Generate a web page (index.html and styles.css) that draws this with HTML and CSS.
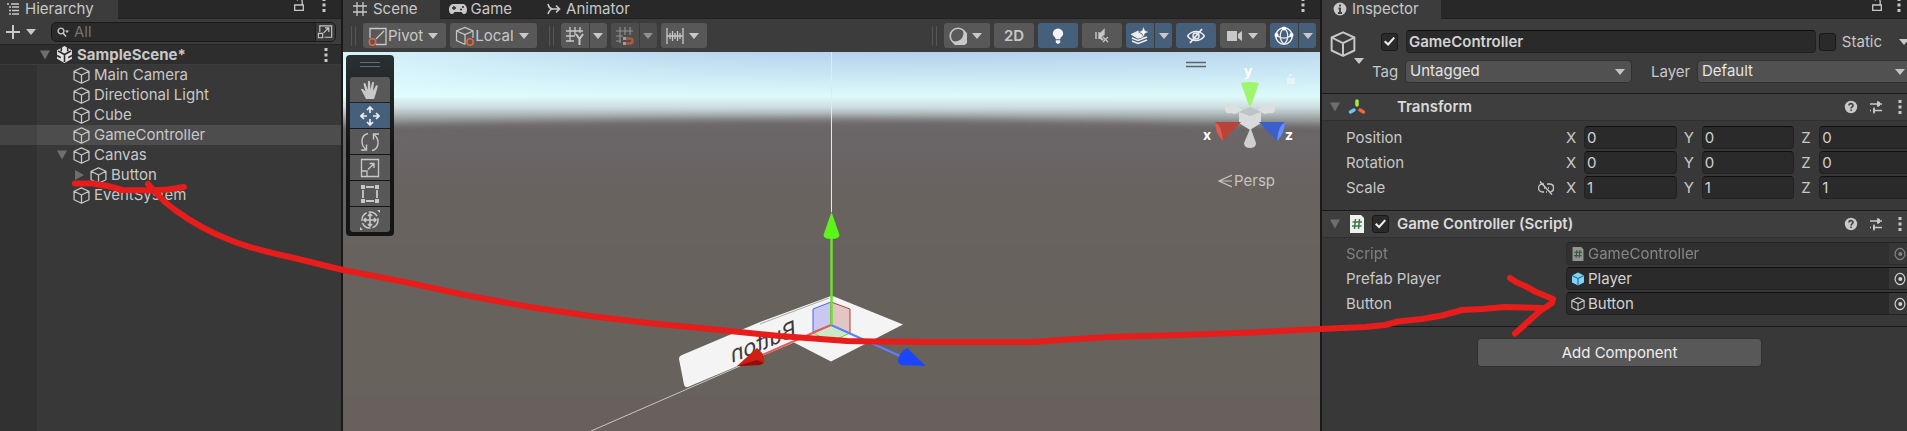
FILE: index.html
```html
<!DOCTYPE html>
<html lang="en">
<head>
<meta charset="utf-8">
<title>SampleScene</title>
<link rel="stylesheet" href="styles.css">
</head>
<body>
<svg class="defs" aria-hidden="true">
  <symbol id="cube" viewBox="0 0 16 16"><path d="M8 .8 15 4v8L8 15.300 1 12V4ZM1 4l7 3.500L15 4M8 7.500v7.800" fill="none" stroke="currentColor" stroke-width="1.200" stroke-linejoin="round"/></symbol>
  <symbol id="dots" viewBox="0 0 4 14"><path d="M.5 0h3v3h-3zM.5 5.500h3v3h-3zM.5 11h3v3h-3z" fill="currentColor"/></symbol>
  <symbol id="lock" viewBox="0 0 12 14"><path d="M1.700 7h8.600v5.300H1.700zM9.200 7V3.500a2.600 2.600 0 0 0-5-1" fill="none" stroke="currentColor" stroke-width="1.300"/></symbol>
  <symbol id="down" viewBox="0 0 10 6"><path d="M0 0h10L5 6z" fill="currentColor"/></symbol>
  <symbol id="fold" viewBox="0 0 10 10"><path d="M0 .5h10L5 9.500z" fill="currentColor"/></symbol>
  <symbol id="help" viewBox="0 0 14 14"><circle cx="7" cy="7" r="6.200" fill="currentColor"/><path d="M5 5.500C5 3 9 3 9 5.400 9 6.800 7.100 6.800 7.100 8.400M7.100 9.600v1.500" fill="none" stroke="#3e3e3e" stroke-width="1.600"/></symbol>
  <symbol id="sliders" viewBox="0 0 14 14"><path d="M1 4h7M11 4h2M9 1v6M1 10.500h1M5 10.500h8M5 7.500v6" fill="none" stroke="currentColor" stroke-width="1.400"/><path d="M8 2h3v4H8zM4 8.500h2v4H4z" fill="currentColor"/></symbol>
  <symbol id="target" viewBox="0 0 12 14"><ellipse cx="6" cy="7" rx="4.900" ry="5.600" fill="none" stroke="currentColor" stroke-width="1.200"/><circle cx="6.300" cy="7" r="2" fill="currentColor"/></symbol>
  <symbol id="script" viewBox="0 0 16 18"><path d="M1 0h11l3 3v15H1z" fill="#f0f0f0"/><path d="M6.500 4 5.500 14M10.500 4l-1 10M3.500 7h9.500M3 11h9.500" fill="none" stroke="#3a7a44" stroke-width="1.500"/></symbol>
</svg>

<main class="editor">
  <section class="panel hierarchy">
    <header class="tabs">
      <button class="tab tab-active"><svg class="i14" viewBox="0 0 14 14"><path d="M1 2h2M5 2h8M3 5h2M6 5h7M3 8.500h2M6 8.500h7M3 12h2M6 12h7" stroke="currentColor" stroke-width="1.300"/></svg>Hierarchy</button>
      <div class="tab-tools"><svg class="lock"><use href="#lock"/></svg><svg class="dots"><use href="#dots"/></svg></div>
    </header>
    <div class="search-bar">
      <button class="add" aria-label="Create"><svg class="plus" viewBox="0 0 16 16"><path d="M8 1v14M1 8h14" stroke="currentColor" stroke-width="2"/></svg><svg class="down"><use href="#down"/></svg></button>
      <label class="search">
        <svg class="lens" viewBox="0 0 12 10"><circle cx="4" cy="4" r="2.900" fill="none" stroke="currentColor" stroke-width="1.400"/><path d="m6 6 3 3.500" stroke="currentColor" stroke-width="1.500"/><path d="M8 3.500h4L10 6z" fill="currentColor"/></svg>
        <input type="text" placeholder="All" aria-label="Search hierarchy">
        <svg class="picker" viewBox="0 0 20 18"><path d="M4 9V2.500h12.500v12H9M2.500 10.500H7V15H2.500zM8 10l5.500-5.500M9.500 4.700h4V9" fill="none" stroke="currentColor" stroke-width="1.200"/></svg>
      </label>
    </div>
    <ul class="tree">
      <li class="row scene-row"><svg class="right fold"><use href="#fold"/></svg><svg class="i16" viewBox="0 0 16 16"><path d="M8 0 1 4v8l7 4 7-4V4Z" fill="#e4e4e4"/><path d="M8 8v7M8 8 2 4.700M8 8l6-3.300M5 1v4M11 1v4M1 9l3.500 2M15 9l-3.500 2" stroke="#2d2d2d" stroke-width="1.500"/></svg><b>SampleScene*</b><svg class="dots"><use href="#dots"/></svg></li>
      <li class="row l1"><svg class="i16"><use href="#cube"/></svg>Main Camera</li>
      <li class="row l1"><svg class="i16"><use href="#cube"/></svg>Directional Light</li>
      <li class="row l1"><svg class="i16"><use href="#cube"/></svg>Cube</li>
      <li class="row l1 selected"><svg class="i16"><use href="#cube"/></svg>GameController</li>
      <li class="row l1 open"><svg class="right fold"><use href="#fold"/></svg><svg class="i16"><use href="#cube"/></svg>Canvas</li>
      <li class="row l2 open"><svg class="right fold" viewBox="0 0 10 10"><path d="M1 0v10l9-5z" fill="currentColor"/></svg><svg class="i16"><use href="#cube"/></svg>Button</li>
      <li class="row l1"><svg class="i16"><use href="#cube"/></svg>EventSystem</li>
    </ul>
  </section>

  <section class="panel scene">
    <header class="tabs">
      <button class="tab tab-active tab-scene"><svg class="i14" viewBox="0 0 14 14"><path d="M4 0v14M10 0v14M0 4h14M0 10h14" stroke="currentColor" stroke-width="1.300"/></svg>Scene</button>
      <button class="tab tab-game"><svg class="pad" viewBox="0 0 18 12"><path d="M5 1h8c3 0 5 2 5 5.500 0 5-3.500 6-5.500 2.500h-7C3.500 12.500 0 11.500 0 6.500 0 3 2 1 5 1Z" fill="currentColor"/><path d="M5 3v4M3 5h4" stroke="#282828" stroke-width="1.300"/><circle cx="12" cy="6.500" r="1" fill="#282828"/><circle cx="14" cy="4" r="1" fill="#282828"/></svg>Game</button>
      <button class="tab tab-anim"><svg class="i14" viewBox="0 0 14 14"><path d="M1 2c1 4 3 5 5 5h6M1 12c1-3 2-5 5-5M9 3.500 12.500 7 9 10.500" fill="none" stroke="currentColor" stroke-width="1.700"/></svg>Animator</button>
      <div class="tab-tools"><svg class="dots"><use href="#dots"/></svg></div>
    </header>
    <div class="toolbar">
      <span class="grip"></span>
      <button class="tool"><svg class="i20" viewBox="0 0 20 20"><path d="M2 12V2.500h16v16H8M8 13l8-8" fill="none" stroke="currentColor" stroke-width="1.300"/><circle cx="4.500" cy="16" r="3.200" fill="none" stroke="#e8663d" stroke-width="1.500"/></svg>Pivot<svg class="down"><use href="#down"/></svg></button>
      <button class="tool"><svg class="i20" viewBox="0 0 20 20"><path d="M10 18.500 1.500 14.500V5L10 1.500 18 5v7M1.500 5 10 8.500 18 5M10 8.500v10" fill="none" stroke="currentColor" stroke-width="1.200"/><circle cx="15" cy="16" r="3.200" fill="none" stroke="#e8663d" stroke-width="1.500"/></svg>Local<svg class="down"><use href="#down"/></svg></button>
      <span class="grip grip-mid"></span>
      <div class="split">
        <button class="tool narrow" aria-label="Grid axis"><svg class="i18" viewBox="0 0 18 18"><path d="M4 0v15M9 0v8M14 0v6M0 4h17M0 9h9M0 14h8" stroke="currentColor" stroke-width="1.300" fill="none"/><path d="m10 7 3.500 5V18M17 7l-3.500 5" stroke="currentColor" stroke-width="2" fill="none"/></svg></button>
        <button class="tool caret" aria-label="Grid options"><svg class="down"><use href="#down"/></svg></button>
      </div>
      <div class="split dim">
        <button class="tool narrow" aria-label="Grid snapping"><svg class="i18" viewBox="0 0 18 18"><path d="M4 0v16M9 0v8M14 0v8M0 4h17M0 9h7M0 14h5" stroke="currentColor" stroke-width="1.200" fill="none"/><path d="M10 11.500h4a2 2 0 0 1 0 5h-4" stroke="#ff6a3a" stroke-width="2.600" fill="none"/><path d="M7 10h3v3H7zM7 15h3v3H7z" fill="#ddd"/></svg></button>
        <button class="tool caret" aria-label="Snap options"><svg class="down"><use href="#down"/></svg></button>
      </div>
      <button class="tool" aria-label="Increment snapping"><svg class="i18" viewBox="0 0 18 18"><path d="M1 1v16M17 1v16M1 9h16M4 6v6M6.500 4v10M9 6v6M11.500 4v10M14 6v6" stroke="currentColor" stroke-width="1.300"/></svg><svg class="down"><use href="#down"/></svg></button>
      <span class="spacer"></span>
      <span class="grip"></span>
      <button class="tool" aria-label="Draw mode"><svg class="i18" viewBox="0 0 18 18"><circle cx="9" cy="9" r="7.800" fill="none" stroke="currentColor" stroke-width="1.600"/><path d="M14 3a8.500 8.500 0 1 1-11 11c7 2 13-3 11-11Z" fill="currentColor"/></svg><svg class="down"><use href="#down"/></svg></button>
      <button class="tool square bold">2D</button>
      <button class="tool square on" aria-label="Scene lighting"><svg class="i18" viewBox="0 0 18 18"><path d="M9 1.500a5.200 5.200 0 0 1 5.200 5.200c0 2.500-2.700 3-3 5.500H6.800c-.3-2.500-3-3-3-5.500A5.200 5.200 0 0 1 9 1.500ZM6.800 13.200h4.400v2.500L9 17 6.800 15.700Z" fill="#f4f4f4"/></svg></button>
      <button class="tool square" aria-label="Scene audio"><svg class="i18" viewBox="0 0 18 18"><path d="M3 5v7M6 5v7M7 7l4-4v11l-4-3Z" stroke="currentColor" stroke-width="1.400" fill="currentColor"/><path d="m10 9 6 7M16 9l-6 7" stroke="#585858" stroke-width="3.500"/><path d="m10 10 5 5M15 10l-5 5" stroke="currentColor" stroke-width="1.200"/></svg></button>
      <div class="split">
        <button class="tool narrow on" aria-label="Effects"><svg class="i18" viewBox="0 0 18 18"><path d="m1 7.500 6-3 1.500 2 3.500 3L7 11ZM1 11l6 2.500 9-3.500M1 14l6 2.500 9-3.500" fill="none" stroke="#eee" stroke-width="1.600"/><path d="m2 7.500 5-2.500 5 4-5 1.500z" fill="#eee"/><path d="M12.500-.5 14 3.500 18 5 14 6.500 12.500 10 11 6.500 7.500 5 11 3.500Z" fill="#fff" stroke="#46607c" stroke-width=".6"/></svg></button>
        <button class="tool caret on" aria-label="Effects options"><svg class="down"><use href="#down"/></svg></button>
      </div>
      <button class="tool square on" aria-label="Hidden objects"><svg class="i18" viewBox="0 0 18 18"><path d="M.5 9C5 3 13 3 17.500 9 13 15 5 15 .5 9Z" fill="none" stroke="#eee" stroke-width="1.500"/><circle cx="9" cy="9" r="3" fill="none" stroke="#eee" stroke-width="1.500"/><path d="M3 16 15 2" stroke="#eee" stroke-width="1.800"/></svg></button>
      <button class="tool" aria-label="Camera settings"><svg class="i18" viewBox="0 0 18 18"><path d="M2 4h10v10H2zM13 7l4-3v10l-4-3z" fill="currentColor"/></svg><svg class="down"><use href="#down"/></svg></button>
      <div class="split last">
        <button class="tool narrow on" aria-label="Gizmos"><svg class="i20" viewBox="0 0 20 20"><circle cx="10" cy="10" r="8.200" fill="none" stroke="#eee" stroke-width="1.600"/><path d="M10 2c-5 4-5 12 0 16M10 2c5 4 5 12 0 16M2 9c5 4 11 4 16 0" fill="none" stroke="#eee" stroke-width="1.300"/><circle cx="10" cy="2.500" r="2" fill="#fff"/><circle cx="2.500" cy="9" r="2" fill="#fff"/><circle cx="17.500" cy="9" r="2" fill="#fff"/></svg></button>
        <button class="tool caret on" aria-label="Gizmo options"><svg class="down"><use href="#down"/></svg></button>
      </div>
    </div>
    <div class="viewport">
      <svg class="world" viewBox="343 52 977 379" preserveAspectRatio="xMidYMin slice">
        <defs>
          <linearGradient id="sky" x1="0" y1="0" x2="0" y2="1"><stop offset="0" stop-color="#b5d0ec"/><stop offset=".3" stop-color="#c9e6f4"/><stop offset=".56" stop-color="#e0fafb"/><stop offset=".7" stop-color="#cfe0e1"/><stop offset="1" stop-color="#6c6769"/></linearGradient>
          <linearGradient id="glow" x1="0" y1="0" x2="1" y2="0"><stop offset="0" stop-color="#e2ffff" stop-opacity=".75"/><stop offset=".35" stop-color="#d8f8ff" stop-opacity=".2"/><stop offset=".6" stop-color="#cfeaf4" stop-opacity="0"/><stop offset="1" stop-color="#d4f8fa" stop-opacity=".25"/></linearGradient>
          <linearGradient id="ground" x1="0" y1="0" x2="0" y2="1"><stop offset="0" stop-color="#6c676a"/><stop offset=".22" stop-color="#68635f"/><stop offset="1" stop-color="#69615b"/></linearGradient>
          <filter id="soft" x="-5%" y="-10%" width="110%" height="120%"><feGaussianBlur stdDeviation="4"/></filter>
        </defs>
        <rect x="343" y="52" width="977" height="78" fill="url(#sky)"/>
        <rect x="343" y="52" width="977" height="46" fill="url(#glow)"/>
        <path d="M300 130Q830 109 1360 130V500H300Z" fill="url(#ground)" filter="url(#soft)"/>
        <path d="M831.500 52V212" stroke="#e8e8e8"/>
        <path d="M591 431 740 366" stroke="#c9c6c2"/>
        <path d="M679 359q0-3 3-4l78-33 71-26 3 .5 69 28-72 37-37-19-55 23-50 21q-4 2-5-2Z" fill="#f4f4f4"/>
        <path d="m760 324 69-26" stroke="#a9a9a9" fill="none"/>
        <text class="mirror" transform="matrix(-.92 .39 .05 1 796 336)">Button</text>
        <path d="m831 302-18 7v23l18-7z" fill="#c9c9f0" stroke="#4763f0"/>
        <path d="m831 302 19 7v24l-19-8z" fill="#e2c6c6" stroke="#b83c35"/>
        <path d="m831 325-18 8 18 8 19-8z" fill="#cde8c6"/><path d="m813 333 8 4M850 333l-11 5" stroke="#5fd52e"/>
        <path d="M831 325 762 355" stroke="#e85a55" stroke-width="2"/>
        <path d="m831 325 69 31" stroke="#5c80ff" stroke-width="2"/>
        <path d="M831.500 325V236" stroke="#6ae02f" stroke-width="2.500"/>
        <path d="m831.500 212 8 23q0 4-8 4t-8-4z" fill="#5cf41b"/>
        <path d="m737 366 20-18q9 7 7 15l-4 2z" fill="#d01f15"/><path d="m737 366 20-6 7 3-4 2z" fill="#8d100c"/>
        <path d="m926 366-19-18q-9 5-9 14l3 3z" fill="#1a46ff"/>
      </svg>
      <div class="toolbox">
        <span class="lines"></span>
        <button aria-label="View tool"><svg class="i20" viewBox="0 0 20 20"><path d="M6 19 4 15 1 9.500q1-1.500 3 .5l1.500 1.500L3.500 4q1-2 2.200 0l2 6L8 1.500q1-1.700 2 0l.5 8 1.500-7q1.500-1.500 2 .3L13 11l3-5.500q1.700-1 1.800.7L16 13l-2 6Z" fill="currentColor"/></svg></button>
        <button class="on" aria-label="Move tool"><svg class="i20" viewBox="0 0 20 20"><path d="M10 7V1.500M7 4l3-3 3 3M10 13v5.500M7 16l3 3 3-3M7 10H1.500M4 7l-3 3 3 3M13 10h5.500M16 7l3 3-3 3" fill="none" stroke="#eee" stroke-width="1.700"/></svg></button>
        <button aria-label="Rotate tool"><svg class="i20" viewBox="0 0 20 20"><path d="M8 1.500C1 3 0 12 5.500 17M1 18h5.500v-5.500M12 18.500C19 17 20 8 14.500 3M19 2h-5.500v5.500" fill="none" stroke="currentColor" stroke-width="1.400"/></svg></button>
        <button aria-label="Scale tool"><svg class="i20" viewBox="0 0 20 20"><path d="M1.500 1.500h17v17h-17zM1.500 13H7v5.500M8 11.500l6-6M9.500 5.500H14V10" fill="none" stroke="currentColor" stroke-width="1.300"/></svg></button>
        <button aria-label="Rect tool"><svg class="i20" viewBox="0 0 20 20"><path d="M3 6v8M17 6v8M6 3h8M6 17h8" stroke="currentColor" stroke-width="1.800"/><path d="M1 1h4v4H1zM15 1h4v4h-4zM1 15h4v4H1zM15 15h4v4h-4z" fill="currentColor"/></svg></button>
        <button aria-label="Transform tool"><svg class="i20" viewBox="0 0 20 20"><circle cx="10" cy="10" r="8" fill="none" stroke="currentColor" stroke-width="1.500" stroke-dasharray="10 2"/><path d="M10 4v12M4 10h12M8 6l2-2 2 2M8 14l2 2 2-2M6 8l-2 2 2 2M14 8l2 2-2 2" fill="none" stroke="currentColor" stroke-width="1.600"/><path d="M17 0h3v3zM0 17v3h3z" fill="currentColor"/></svg></button>
      </div>
      <div class="orient">
        <svg viewBox="0 0 120 106">
          <path d="M1 10.500h20M1 14.500h20" stroke="#5b6467" stroke-width="1.400"/>
          <path d="M40 57q0-7 8-5l10 6-8 4-4-1q-6 1-6-4M90 57q0-7-8-5l-10 6 8 4 4-1q6 1 6-4" fill="#dcdfdf"/>
          <path d="M65 77h1l5 14q0 5-6 5t-6-5z" fill="#cfcfcf"/>
          <path d="m54 60 11-5 11 5v11l-11 7-11-7z" fill="#d9dadb"/><path d="m54 60 11-5 11 5-11 4z" fill="#bfc3c3"/>
          <path d="M56 31q9-2 18 0l-8 23h-2z" fill="#a0f56e"/>
          <path d="M30 70h26L38 89q-8-8-8-19" fill="#b8433a"/><path d="M30 70q7 4 8 19-8-8-8-19" fill="#dd5a4f"/>
          <path d="M100 70H74l18 19q8-8 8-19" fill="#3c5fc9"/><path d="M100 70q-7 4-8 19 8-8 8-19" fill="#6b8cff"/>
          <text x="59" y="24">y</text><text x="18" y="88">x</text><text x="100" y="88">z</text>
          <path d="M102 26h8v6h-8zM103 26q1-6 5-3" fill="#eaf6f7" fill-opacity=".8"/>
        </svg>
        <span class="persp"><svg class="i14" viewBox="0 0 14 14"><path d="M14 1 1 7l13 6M1 7h13" fill="none" stroke="currentColor" stroke-width="1.200"/></svg>Persp</span>
      </div>
    </div>
  </section>

  <section class="panel inspector">
    <header class="tabs">
      <button class="tab tab-active"><svg class="i14" viewBox="0 0 14 14"><circle cx="7" cy="7" r="6.400" fill="currentColor"/><path d="M7 2.500v2M5.500 6.500H7V11M5 11h4" stroke="#3c3c3c" stroke-width="1.800" fill="none"/></svg>Inspector</button>
      <div class="tab-tools"><svg class="lock"><use href="#lock"/></svg><svg class="dots"><use href="#dots"/></svg></div>
    </header>
    <div class="body">
      <div class="object">
        <svg class="big-cube"><use href="#cube"/></svg><svg class="down cube-caret"><use href="#down"/></svg>
        <div class="object-rows">
          <div class="line">
            <input type="checkbox" id="active" checked aria-label="Active"><input class="field name" type="text" value="GameController" aria-label="Name"><input type="checkbox" id="static"><label class="static" for="static">Static</label><svg class="down"><use href="#down"/></svg>
          </div>
          <div class="line">
            <label class="tag" for="tag">Tag</label><span class="select"><select id="tag"><option>Untagged</option></select></span>
            <label class="layer" for="layer">Layer</label><span class="select"><select id="layer"><option>Default</option></select></span>
          </div>
        </div>
      </div>

      <div class="component-head">
        <svg class="right fold"><use href="#fold"/></svg>
        <svg class="i18 comp-icon" viewBox="0 0 18 18"><path d="M9 3v4" stroke="#a5ef3c" stroke-width="3.500" stroke-linecap="round"/><path d="m12 12 3.500 2" stroke="#f0683c" stroke-width="3.500" stroke-linecap="round"/><path d="m6 12-3.500 2" stroke="#6cc4f5" stroke-width="3.500" stroke-linecap="round"/></svg>
        <h2 class="no-check">Transform</h2>
        <svg class="i14"><use href="#help"/></svg><svg class="i14"><use href="#sliders"/></svg><svg class="dots"><use href="#dots"/></svg>
      </div>
      <div class="props transform">
        <div class="prop"><span class="label">Position</span><div class="vector"><label>X<input class="field" value="0"></label><label>Y<input class="field" value="0"></label><label>Z<input class="field" value="0"></label></div></div>
        <div class="prop"><span class="label">Rotation</span><div class="vector"><label>X<input class="field" value="0"></label><label>Y<input class="field" value="0"></label><label>Z<input class="field" value="0"></label></div></div>
        <div class="prop"><span class="label">Scale<svg class="link" viewBox="0 0 16 14"><path d="M6 3H4.500a4 4 0 0 0 0 8H6M9 3h2.500a4 4 0 0 1 1 7.900M8 11h1M6 7h1M10 7h1M2 .5l12 13" fill="none" stroke="currentColor" stroke-width="1.400"/></svg></span><div class="vector"><label>X<input class="field" value="1"></label><label>Y<input class="field" value="1"></label><label>Z<input class="field" value="1"></label></div></div>
      </div>

      <div class="component-head">
        <svg class="right fold"><use href="#fold"/></svg>
        <svg class="i18 comp-icon"><use href="#script"/></svg>
        <input type="checkbox" id="enabled" checked>
        <h2><label for="enabled">Game Controller (Script)</label></h2>
        <svg class="i14"><use href="#help"/></svg><svg class="i14"><use href="#sliders"/></svg><svg class="dots"><use href="#dots"/></svg>
      </div>
      <div class="props">
        <div class="prop disabled"><span class="label">Script</span><button class="field object-field"><svg class="i14"><use href="#script"/></svg>GameController<span class="pick"><svg><use href="#target"/></svg></span></button></div>
        <div class="prop"><span class="label">Prefab Player</span><button class="field object-field"><svg class="i14" viewBox="0 0 14 14"><path d="M7 .5 1 3.500v7l6 3 6-3v-7Z" fill="#7fd3fb"/><path d="m1 3.500 6 3 6-3M7 6.500v7" stroke="#225a78" fill="none"/></svg>Player<span class="pick"><svg><use href="#target"/></svg></span></button></div>
        <div class="prop"><span class="label">Button</span><button class="field object-field"><svg class="i14"><use href="#cube"/></svg>Button<span class="pick"><svg><use href="#target"/></svg></span></button></div>
      </div>
      <div class="add-row"><button class="add-component">Add Component</button></div>
    </div>
  </section>

  <svg class="marker" viewBox="0 0 1907 431" preserveAspectRatio="none" aria-hidden="true">
    <path d="M75 183.500 92 183.500 108 186 122 190 150 190.500 168 189.500 184 187"/>
    <path d="M148 184 153 190 165 202 175 210Q203 230 230 240 252 249 290 257L343 270 400 281 470 296 530 307 590 316Q650 324 710 329L780 336 847 341Q900 342 960 342H1035L1060 340 1110 337 1180 335 1250 332.500 1320 329 1365 327 1385 325 1398 321.500 1422 319 1442 315.500 1462 310 1482 309 1505 307 1541 308"/>
    <path d="M1510 278 1516 282 1525 286 1535 291.500 1553 299 1552 303 1540 311 1515 333.500"/>
  </svg>
</main>
</body>
</html>
```

FILE: styles.css
```css
* { box-sizing: border-box; }

body {
  margin: 0;
  background: #191919;
  color: #c8c8c8;
  font: 15px/20px Inter, "Liberation Sans", sans-serif;
}

button, input, select { font: inherit; color: inherit; margin: 0; border: 0; padding: 0; }
button { background: none; display: flex; align-items: center; }
svg { flex: none; display: block; }

.defs { position: absolute; width: 0; height: 0; }
.i14 { width: 14px; height: 14px; }
.i16 { width: 17px; height: 17px; }
.i18 { width: 18px; height: 18px; }
.i20 { width: 20px; height: 20px; }
.dots { width: 4px; height: 14px; }
.lock { width: 12px; height: 14px; }
.down { width: 10px; height: 6px; }
.right { width: 10px; height: 10px; }
.fold { color: #6e6e6e; }

.editor {
  position: relative;
  display: grid;
  grid-template-columns: 341fr 977fr 585fr;
  gap: 2px;
  min-height: 100vh;
}

.panel { display: flex; flex-direction: column; min-width: 0; overflow: hidden; background: #383838; }

/* Tab strips */
.tabs { display: flex; height: 19px; background: #282828; border-bottom: 1px solid #202020; }
.tab { height: 19px; padding: 0 24px 1px 6px; gap: 5px; line-height: 18px; }
.tab-active { background: #3c3c3c; }
.tab-scene { padding-left: 10px; padding-right: 22px; gap: 6px; }
.tab-game { padding-left: 9px; gap: 4px; }
.tab-anim { padding-left: 11px; }
.pad { width: 18px; height: 12px; }
.inspector .tab { padding-left: 11px; padding-right: 22px; }
.tab-tools { display: flex; gap: 17px; margin: -2px 15px 0 auto; }
.inspector .tab-tools { margin-right: 6px; gap: 14px; }

/* Hierarchy */
.search-bar { display: flex; align-items: center; height: 26px; padding: 0 5px; background: #3c3c3c; border-bottom: 1px solid #232323; }
.add { gap: 5px; width: 46px; }
.plus { width: 16px; height: 16px; }
.search { display: flex; align-items: center; flex: 1; min-width: 0; height: 20px; padding-left: 5px; background: #2a2a2a; border: 1px solid #191919; border-radius: 5px; }
.lens { width: 12px; height: 10px; }
.search input { flex: 1; min-width: 0; height: 18px; padding-left: 5px; background: none; outline: 0; }
.search input::placeholder { color: #737373; opacity: 1; }
.picker { width: 20px; height: 18px; border-left: 1px solid #1f1f1f; background: #3a3a3a; border-radius: 0 4px 4px 0; }

.tree { flex: 1; margin: 0; padding: 0; list-style: none; background: linear-gradient(90deg, #313131 37px, #383838 37px); }
.row { display: flex; align-items: center; gap: 4px; height: 20px; padding-left: 73px; white-space: nowrap; }
.row .fold { margin-right: 2px; }
.scene-row { background: #2d2d2d; padding: 0 13px 0 40px; border-bottom: 1px solid #3c3c3c; }
.scene-row .dots { margin-left: auto; }
.selected { background: linear-gradient(90deg, #444 37px, #4d4d4d 37px); }
.l1.open { padding-left: 57px; }
.l2.open { padding-left: 74px; }

/* Scene view */
.toolbar { display: flex; align-items: center; gap: 4px; height: 33px; padding: 0 4px 0 8px; background: #3c3c3c; }
.grip { width: 5px; height: 20px; margin-right: 3px; border: solid #555; border-width: 0 1px; }
.grip-mid { margin-left: 8px; }
.spacer { flex: 1; }
.tool { justify-content: center; height: 25px; padding: 0 8px 0 5px; background: #585858; border-radius: 3px; }
.tool .down { margin-left: 5px; }
.split { display: flex; gap: 1px; }
.split .narrow { width: 28px; padding: 0; border-radius: 3px 0 0 3px; }
.split .caret { width: 17px; padding: 0; border-radius: 0 3px 3px 0; }
.split .down { margin: 0; }
.tool.square { width: 40px; padding: 0; }
.bold { font-weight: 600; }
.on { background: #46607c; }
.dim { opacity: .6; }

.viewport { position: relative; flex: 1; min-height: 300px; background: #69615b; overflow: hidden; }
.world { position: absolute; inset: 0; width: 100%; height: 100%; }
.mirror { font: 23px Inter, sans-serif; fill: #3a3a3a; }

.toolbox { position: absolute; left: 3px; top: 3px; display: flex; flex-direction: column; gap: 1px; width: 48px; padding: 4px; background: linear-gradient(#293033, #151515 50%); border-radius: 4px; }
.lines { width: 20px; height: 5px; margin: 3px auto 9px; border: solid #666b6d; border-width: 1px 0; }
.toolbox button { justify-content: center; height: 25px; background: #585858; }
.toolbox .on { background: #46607c; }
.toolbox button:nth-of-type(1) { border-radius: 3px 3px 0 0; }
.toolbox button:nth-of-type(6) { border-radius: 0 0 3px 3px; }

.orient { position: absolute; top: 0; right: 15px; width: 120px; display: flex; flex-direction: column; gap: 13px; }
.orient text { font: 700 14px Inter, sans-serif; fill: #fff; }
.persp { display: flex; align-items: center; gap: 2px; padding-left: 33px; color: #c6c3c0; }

/* Inspector */
.body { width: calc(100% + 10px); }
.object { display: flex; height: 74px; padding: 11px 0 0 8px; background: #3c3c3c; }
.big-cube { width: 26px; height: 28px; }
.cube-caret { margin: 28px 0 0 -2px; }
.object-rows { flex: 1; min-width: 0; display: flex; flex-direction: column; gap: 7px; }
.line { display: flex; align-items: center; height: 23px; padding: 0 8px 0 17px; }
.line + .line { padding: 0 5px 0 8px; }

.field { height: 23px; min-width: 0; background: #2a2a2a; border: 1px solid #212121; border-top-color: #0f0f0f; border-radius: 4px; color: #d2d2d2; }
input.field { padding: 0 2px; outline: 0; }
.name { flex: 1; margin: 0 3px 0 8px; font-weight: 600; }

input[type="checkbox"] { appearance: none; flex: none; width: 17px; height: 18px; background: #2a2a2a; border: 1px solid #191919; border-radius: 3px; }
input[type="checkbox"]:checked::before { content: ""; display: block; width: 11px; height: 10px; margin: 3px 2px; background: #eee; clip-path: polygon(0 55%, 14% 40%, 36% 66%, 86% 4%, 100% 18%, 38% 96%); }
.static { margin: 0 17px 0 6px; }

.select { position: relative; flex: 227; min-width: 0; display: flex; }
.select select { appearance: none; width: 100%; height: 23px; padding: 0 4px 2px; background: #515151; border: 1px solid #303030; border-radius: 4px; color: #e4e4e4; }
.select::after { content: ""; position: absolute; right: 7px; top: 9px; border: solid transparent; border-width: 6px 5px 0; border-top-color: #c4c4c4; }
.select:last-child { flex: 215; }
.tag { width: 33px; }
.layer { width: 65px; padding-left: 19px; }

.component-head { display: flex; align-items: center; height: 28px; padding: 0 15px 0 8px; background: #3e3e3e; border: solid #1a1a1a; border-width: 1px 0; border-bottom-color: #303030; }
.comp-icon { margin: 0 6px 0 8px; }
.component-head h2 { flex: 1; margin: 0 0 0 8px; font-size: 15px; font-weight: 600; color: #dadada; }
.component-head h2.no-check { margin-left: 25px; }
.component-head .i14 { margin-right: 11px; }
.component-head .i14 + .i14 { margin-right: 15px; }

.props { display: flex; flex-direction: column; gap: 2px; padding: 5px 5px 11px 24px; }
.props:not(.transform) { padding-top: 4px; }
.prop { display: flex; align-items: center; height: 23px; }
.label { display: flex; justify-content: space-between; align-items: center; flex: none; width: 220px; padding-right: 12px; }
.link { width: 16px; height: 14px; }
.vector { display: flex; gap: 7px; flex: 1; min-width: 0; }
.vector label { display: flex; align-items: center; justify-content: space-between; flex: 1; min-width: 0; }
.vector .field { width: calc(100% - 18px); }
.object-field { flex: 1; gap: 3px; padding: 0 0 0 4px; }
.pick { display: flex; align-items: center; justify-content: center; align-self: stretch; width: 22px; margin-left: auto; background: #373737; }
.pick svg { width: 12px; height: 14px; }
.disabled { opacity: .5; }

.add-row { display: flex; justify-content: center; padding-top: 11px; border-top: 1px solid #1a1a1a; }
.add-component { justify-content: center; width: 48%; height: 29px; background: #585858; border: 1px solid #303030; border-radius: 4px; color: #eee; }

.marker { position: absolute; inset: 0; width: 100%; height: 100%; pointer-events: none; fill: none; stroke: #e71d1c; stroke-width: 6; stroke-linecap: round; stroke-linejoin: round; }
```
